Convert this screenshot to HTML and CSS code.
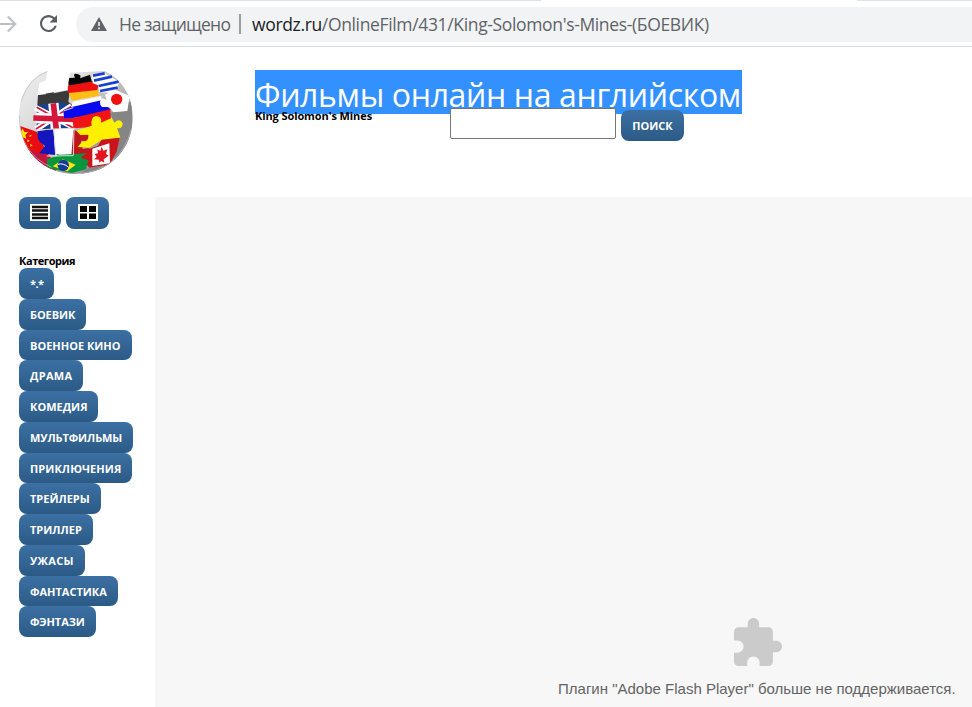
FILE: index.html
```html
<!DOCTYPE html>
<html lang="ru">
<head>
<meta charset="utf-8">
<title>Фильмы онлайн на английском</title>
<link rel="stylesheet" href="styles.css">
</head>
<body>
<div class="tabstrip"><span class="tab-edge left"></span><span class="tab-edge right"></span></div>
<nav class="toolbar">
  <svg class="forward" viewBox="0 0 17 18" width="17" height="18"><path d="M0 9H15M7.8 1.5L15.3 9L7.8 16.5" fill="none" stroke="#bdbfc1" stroke-width="2"/></svg>
  <svg class="reload" viewBox="4 4 16 16" width="17" height="17"><path fill="#5a5e62" d="M17.65 6.35C16.2 4.9 14.21 4 12 4c-4.42 0-7.99 3.58-7.99 8s3.57 8 7.99 8c3.73 0 6.84-2.55 7.73-6h-2.08c-.82 2.33-3.04 4-5.65 4-3.31 0-6-2.69-6-6s2.69-6 6-6c1.66 0 3.14.69 4.22 1.78L13 11h7V4l-2.35 2.35z"/></svg>
  <div class="address">
    <svg class="warn" viewBox="0 0 16 14" width="16" height="14"><path fill="#5f6368" d="M8 0L16 14H0z"/><path d="M8 5v4M8 10.5v1.7" stroke="#f1f3f4" stroke-width="1.6"/></svg>
    <span class="insecure">Не защищено</span>
    <span class="divider"></span>
    <span class="url"><b>wordz.ru</b>/OnlineFilm/431/King-Solomon's-Mines-(БОЕВИК)</span>
  </div>
</nav>
<header class="masthead">
  <svg class="logo" viewBox="0 0 405 375" width="135" height="125">
    <defs>
      <linearGradient id="ball" x1="0" y1="0" x2="1" y2="1"><stop offset="0" stop-color="#f0f0f0"/><stop offset=".3" stop-color="#dedede"/><stop offset="1" stop-color="#707070"/></linearGradient>
      <clipPath id="round"><path d="M112 34C60 50 27 105 27 170C27 270 100 342 198 342C300 342 368 265 368 172C368 110 335 55 284 33L180 38L172 90L82 105L88 70L108 60Z"/></clipPath>
    </defs>
    <g clip-path="url(#round)">
      <rect x="20" y="25" width="355" height="325" fill="url(#ball)"/>
      <path d="M300 160L368 120V260L320 320L205 345L235 325L310 312L330 225Z" fill="#858585"/>
      <path d="M30 198L80 215L115 285L155 330L100 325L45 260Z" fill="#e80d12"/>
      <path d="M55 270L110 285L140 335L95 322Z" fill="#bd1740"/>
      <path d="M33 216l5-11 5 11 12 1-9 8 3 12-11-6-10 6 3-12-9-8z" fill="#ffe500"/>
      <path d="M52 238l7 4-6 5zM61 252l7 4-7 4zM59 224l7 3-7 4z" fill="#ffe500"/>
      <path d="M84 105L108 103Q100 82 119 81Q138 82 131 100L180 90L175 125L190 137L165 145L153 132L82 136Z" fill="#3a3a3a"/>
      <path d="M80 136L153 127L177 135L194 205L80 210Z" fill="#174093"/>
      <path d="M76 143L194 203M78 208L185 138" stroke="#fff" stroke-width="18"/>
      <path d="M80 142L190 204M78 207L184 139" stroke="#db1738" stroke-width="5"/>
      <path d="M130 130L138 209M78 174L194 178" stroke="#fff" stroke-width="31"/>
      <path d="M130 130L139 209M70 174L194 178" stroke="#d5163b" stroke-width="17"/>
      <path d="M82 214L130 207L137 285L88 280L105 258L91 247L84 237Z" fill="#1515bd"/>
      <path d="M130 207L192 205L190 286L137 290Z" fill="#fff"/>
      <path d="M190 210L238 225L234 244L213 242L218 267L238 264L230 292L184 288Z" fill="#bd161b"/>
      <path d="M171 54L195 53Q187 39 202 42Q216 45 210 55L240 44L245 63L262 66L248 78L176 77Z" fill="#080808"/>
      <path d="M172 77L250 64L265 77L260 99L175 99Z" fill="#ed1111"/>
      <path d="M176 99L264 90L268 111L186 124Z" fill="#ffbd16"/>
      <path d="M247 43L278 37L328 66L315 100L268 96L265 76L248 70Z" fill="#fff"/>
      <path d="M249 47L284 40M252 62L306 50M266 78L326 65M270 93L323 83" stroke="#1740cf" stroke-width="8"/>
      <path d="M188 125L274 107L277 140L160 150L183 145Z" fill="#fff"/>
      <path d="M160 150L185 141L274 121L289 139L301 147L300 155L211 172L162 175Z" fill="#0909ed"/>
      <path d="M188 174L301 148L303 187L265 192L237 202L190 205Z" fill="#f01414"/>
      <path d="M285 104L315 89L359 108L352 153L310 157L298 141L276 141Q262 126 278 115L290 120Z" fill="#fff"/>
      <circle cx="320" cy="118" r="17" fill="#f01010"/>
      <path d="M199 212L245 197Q240 174 257 168Q277 168 273 188L305 174L313 188Q330 173 338 190Q337 209 321 204L331 233L275 240L238 263L203 261L216 245Q238 245 235 224L211 225Z" fill="#ffef00"/>
      <path d="M218 273L263 258L275 239L329 233L320 275L299 313L238 323L211 291Z" fill="#c9141c"/>
      <path d="M247 266L298 250L300 310L247 318Z" fill="#fff"/>
      <path d="M275 260l5 12 12-4-4 14 8 5-15 11 2 10-9-5-6 5-1-9-15-1 8-7-6-9 10-2-2-12 9 5z" fill="#e11420"/>
      <path d="M112 296L143 288Q132 279 150 284L230 280L211 293L235 301L228 328L184 339L110 323Z" fill="#08963d"/>
      <path d="M128 319L159 298L197 314L172 334Z" fill="#ffe312"/>
      <circle cx="160" cy="316" r="17" fill="#153a91"/><path d="M144 313Q160 308 176 322" stroke="#fff" stroke-width="3" fill="none"/>
      <path d="M82 210L130 207L194 205M137 289L132 207M190 286L192 205M185 124L268 109M160 153L190 143M110 288L190 287" fill="none" stroke="#ddd" stroke-width="3"/>
    </g>
    <path d="M112 34Q55 55 33 125M28 166Q28 280 125 322M198 341Q330 335 365 205" fill="none" stroke="#bbb" stroke-width="2"/>
  </svg>
  <div class="heading">
    <h1><span>Фильмы онлайн на английском</span></h1>
    <div class="subline">
      <h2>King Solomon's Mines</h2>
      <form class="search"><input type="text" aria-label="Поиск"><button type="button" class="btn find">ПОИСК</button></form>
    </div>
  </div>
</header>
<main>
  <aside>
    <div class="views">
      <button class="btn list" aria-label="Список"><svg viewBox="0 0 20 17" width="20" height="17"><path fill="#fff" d="M0 0h20v17H0z"/><path d="M2 3h16M2 6.5h16M2 10.5h16M2 14h16" stroke="#111" stroke-width="2.3"/></svg></button>
      <button class="btn grid" aria-label="Плитка"><svg viewBox="0 0 20 17" width="20" height="17"><path fill="#fff" d="M0 0h20v17H0z"/><path d="M2 2h7v6H2zM11 2h7v6h-7zM2 9.5h7v5.5H2zM11 9.5h7V15h-7z"/></svg></button>
    </div>
    <h3>Категория</h3>
    <div class="categories">
      <button class="btn any">*.*</button>
      <button class="btn tight">БОЕВИК</button>
      <button class="btn">ВОЕННОЕ КИНО</button>
      <button class="btn loose">ДРАМА</button>
      <button class="btn">КОМЕДИЯ</button>
      <button class="btn tight">МУЛЬТФИЛЬМЫ</button>
      <button class="btn wide">ПРИКЛЮЧЕНИЯ</button>
      <button class="btn">ТРЕЙЛЕРЫ</button>
      <button class="btn">ТРИЛЛЕР</button>
      <button class="btn loose">УЖАСЫ</button>
      <button class="btn">ФАНТАСТИКА</button>
      <button class="btn tight">ФЭНТАЗИ</button>
    </div>
  </aside>
  <section class="player">
    <svg viewBox="2 1 21 21" width="48" height="48"><path fill="#cbcbcb" d="M20.5 11H19V7c0-1.1-.9-2-2-2h-4V3.5C13 2.12 11.88 1 10.5 1S8 2.12 8 3.5V5H4c-1.1 0-1.99.9-1.99 2v3.8H3.5c1.49 0 2.7 1.21 2.7 2.7s-1.21 2.7-2.7 2.7H2V20c0 1.1.9 2 2 2h3.8v-1.5c0-1.49 1.21-2.7 2.7-2.7 1.49 0 2.7 1.21 2.7 2.7V22H17c1.1 0 2-.9 2-2v-4h1.5c1.38 0 2.5-1.12 2.5-2.5S21.88 11 20.5 11z"/></svg>
    <p>Плагин "Adobe Flash Player" больше не поддерживается.</p>
  </section>
</main>
</body>
</html>
```
FILE: styles.css
```css
* { box-sizing: border-box; }
body { margin: 0; width: 972px; height: 707px; overflow: hidden; background: #fff; color: #000; font-family: "Open Sans", "Noto Sans", sans-serif; }
h1, h2, h3, p { margin: 0; }
svg { display: block; flex: none; }

.tabstrip { height: 1px; display: flex; justify-content: space-between; }
.tab-edge { background: #dee1e6; }
.tab-edge.left { width: 541px; }
.tab-edge.right { width: 115px; }
.toolbar { height: 46px; display: flex; align-items: center; border-bottom: 1px solid #dadce0; }
.reload { margin-left: 23px; }
.address { flex: 1; height: 35px; margin: 1px 0 0 19px; padding-left: 15px; display: flex; align-items: center; background: #f1f3f4; border-radius: 18px 0 0 18px; font-size: 17.5px; color: #5f6368; white-space: nowrap; }
.insecure { width: 112px; margin-left: 12px; padding-bottom: 1px; letter-spacing: -0.75px; }
.divider { width: 2px; height: 20px; margin: 0 11px 0 8px; background: #9a9da0; }
.url { padding-bottom: 1px; letter-spacing: -0.35px; }
.url b { font-weight: 400; color: #202124; }

.masthead { height: 150px; display: flex; }
.logo { margin: 13px 0 0 10px; }
.heading { margin: 23px 0 0 110px; }
h1 { height: 44px; font-size: 32px; line-height: 49px; font-weight: 400; letter-spacing: -0.36px; color: #fff; white-space: nowrap; }
h1 span { display: block; width: 487px; height: 44px; background: #3390ff; }
.subline { display: flex; margin-top: -6px; position: relative; }
h2 { width: 195px; font-size: 11px; line-height: 16px; font-weight: 700; letter-spacing: -0.1px; white-space: nowrap; }
.search { display: flex; gap: 5px; }
.search input { width: 166px; height: 31px; border: 1px solid #767676; border-radius: 2px; background: #fff; }

.btn { display: block; height: 30.75px; padding: 1px 11px 0; border: 0; border-radius: 8px; background: linear-gradient(#3c70a3, #2b5a86); color: #fff; font: 700 11px/30px "Open Sans", "Noto Sans", sans-serif; white-space: nowrap; }
.tight { letter-spacing: -0.1px; }
.wide { letter-spacing: 0.08px; }
.loose { letter-spacing: 0.3px; }
.any { letter-spacing: -0.6px; }
.find { width: 63px; margin-top: 2px; }

main { display: flex; height: 510px; }
aside { width: 155px; padding-left: 19px; }
.views { display: flex; gap: 5px; }
.views .btn { width: 42px; height: 32px; padding-top: 0; padding-bottom: 1px; }
.views .grid { width: 43px; padding-left: 12px; }
h3 { margin-top: 24px; height: 15px; font-size: 11px; line-height: 16px; letter-spacing: -0.45px; }
.categories { display: flex; flex-direction: column; align-items: flex-start; }
.player { flex: 1; background: #f7f7f7; }
.player svg { margin: 421px 0 0 579px; }
.player p { margin: 13px 0 0 403px; font: 15px/20px "Liberation Sans", sans-serif; color: #646464; white-space: nowrap; }
```
